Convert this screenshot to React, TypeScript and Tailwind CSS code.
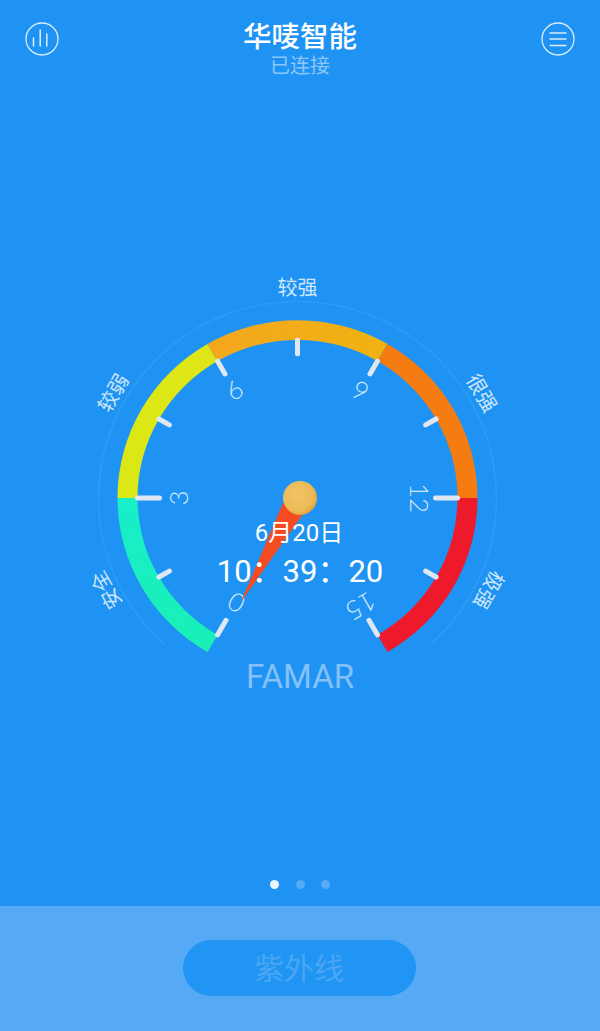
const CX = 297.5;
const CY = 498;
const SQUASH = 0.988; // the dial is a touch flatter than a true circle

/** Polar point on the dial; angle is degrees clockwise from straight up. */
function pt(r: number, deg: number) {
  const a = (deg * Math.PI) / 180;
  return { x: CX + r * Math.sin(a), y: CY - r * Math.cos(a) * SQUASH };
}

function band(from: number, to: number, r0 = 160, r1 = 180) {
  const a = pt(r1, from);
  const b = pt(r1, to);
  const c = pt(r0, to);
  const d = pt(r0, from);
  return `M${a.x} ${a.y}A${r1} ${r1 * SQUASH} 0 0 1 ${b.x} ${b.y}L${c.x} ${c.y}A${r0} ${r0 * SQUASH} 0 0 0 ${d.x} ${d.y}Z`;
}

const SEGMENTS = [
  { from: 210, to: 270, fill: "url(#seg-teal)" },
  { from: 270, to: 330, fill: "url(#seg-lime)" },
  { from: 330, to: 390, fill: "url(#seg-amber)" },
  { from: 30, to: 90, fill: "#f47c10" },
  { from: 90, to: 150, fill: "#ee1a2b" },
];

const TICKS = [
  { deg: 210, len: 17 },
  { deg: 240, len: 12 },
  { deg: 270, len: 22 },
  { deg: 300, len: 12 },
  { deg: 330, len: 15 },
  { deg: 360, len: 14 },
  { deg: 390, len: 15 },
  { deg: 420, len: 12 },
  { deg: 450, len: 22 },
  { deg: 480, len: 12 },
  { deg: 510, len: 17 },
];
const NUMBERS = [
  { text: "0", deg: 210, r: 123 },
  { text: "3", deg: 270, r: 120 },
  { text: "6", deg: 330, r: 127 },
  { text: "9", deg: 30, r: 126 },
  { text: "12", deg: 90, r: 122 },
  { text: "15", deg: 150, r: 127 },
];
const LABELS = [
  { text: "安全", deg: 244, rot: 240 },
  { text: "较弱", deg: 300, rot: 300 },
  { text: "较强", deg: 0, rot: 0 },
  { text: "很强", deg: 60, rot: 60 },
  { text: "极强", deg: 116, rot: 120 },
];

function Gauge() {
  const ringStart = pt(199, 222);
  const ringEnd = pt(199, 138);
  return (
    <svg viewBox="0 270 600 387" className="block w-[600px] h-[387px]">
      <defs>
        <linearGradient id="seg-teal" x1="0" y1="0" x2="0" y2="1">
          <stop offset="0" stopColor="#18eec8" />
          <stop offset="1" stopColor="#19f0b6" />
        </linearGradient>
        <linearGradient id="seg-lime" x1="0" y1="1" x2="1" y2="0">
          <stop offset="0" stopColor="#dbe815" />
          <stop offset="1" stopColor="#dfe617" />
        </linearGradient>
        <linearGradient id="seg-amber" x1="0" y1="0" x2="1" y2="0">
          <stop offset="0" stopColor="#f4a71f" />
          <stop offset="1" stopColor="#f0b210" />
        </linearGradient>
        <radialGradient id="hub" cx="0.42" cy="0.42" r="0.6">
          <stop offset="0" stopColor="#efc467" />
          <stop offset="0.75" stopColor="#edbb58" />
          <stop offset="1" stopColor="#e8a23c" />
        </radialGradient>
      </defs>

      <path
        d={`M${ringStart.x} ${ringStart.y}A199 ${199 * SQUASH} 0 1 1 ${ringEnd.x} ${ringEnd.y}`}
        fill="none"
        stroke="#2f9cf4"
        strokeWidth="1.5"
      />

      {SEGMENTS.map((s) => (
        <path key={s.from} d={band(s.from, s.to)} fill={s.fill} />
      ))}

      {TICKS.map((t) => {
        const a = pt(160, t.deg);
        const b = pt(160 - t.len, t.deg);
        return (
          <line
            key={t.deg}
            x1={a.x}
            y1={a.y}
            x2={b.x}
            y2={b.y}
            stroke="#dfe8f2"
            strokeWidth="5"
            strokeLinecap="round"
          />
        );
      })}

      {NUMBERS.map((n) => {
        const p = pt(n.r, n.deg);
        return (
          <text
            key={n.text}
            transform={`translate(${p.x} ${p.y}) rotate(${n.deg})`}
            textAnchor="middle"
            dominantBaseline="central"
            fill="#d5e9fc"
            className="text-[26px] font-light font-['Lato',sans-serif]"
          >
            {n.text}
          </text>
        );
      })}

      {LABELS.map((l) => {
        const p = pt(214, l.deg);
        return (
          <text
            key={l.text}
            transform={`translate(${p.x} ${p.y}) rotate(${l.rot})`}
            textAnchor="middle"
            dominantBaseline="central"
            fill="#cfe6fb"
            className="text-[20px] font-['Noto_Sans_CJK_SC',sans-serif]"
          >
            {l.text}
          </text>
        );
      })}

      <polygon points="241,602 283,503 303,514" fill="#f44b20" />
      <circle cx="300" cy="498" r="17" fill="url(#hub)" />
    </svg>
  );
}

function ChartIcon() {
  return (
    <svg width="34" height="34" viewBox="0 0 34 34" fill="none" stroke="#dcedfc" strokeWidth="1.3">
      <circle cx="17" cy="17" r="16" />
      <path d="M8.5 16V24M15.2 8V24M21.8 12V24" strokeLinecap="round" strokeWidth="1.5" />
    </svg>
  );
}

function MenuIcon() {
  return (
    <svg width="34" height="34" viewBox="0 0 34 34" fill="none" stroke="#dcedfc" strokeWidth="1.3">
      <circle cx="17" cy="17" r="16" />
      <path d="M8.5 11H25.5M8.5 17H25.5M8.5 23.5H25.5" strokeWidth="1.6" />
    </svg>
  );
}

export default function App() {
  return (
    <div className="w-[600px] h-[1031px] flex flex-col overflow-hidden bg-[#1e93f3] font-['Roboto','Noto_Sans_CJK_SC',sans-serif]">
      <header className="h-[270px] shrink-0 flex items-start justify-between px-[25px] pt-[22px]">
        <ChartIcon />
        <div className="flex flex-col items-center">
          <h1 className="text-[28.5px] leading-[31px] font-medium text-white">华唛智能</h1>
          <p className="text-[20px] leading-[26px] text-[#8cc6f8]">已连接</p>
        </div>
        <MenuIcon />
      </header>

      <div className="relative shrink-0">
        <Gauge />
        <div className="absolute left-0 right-0 top-[246px] flex flex-col items-center text-white">
          <div className="text-[24px] leading-[34px] ml-[-2px]">6月20日</div>
          <div className="text-[31px] leading-[44px]">10：39：20</div>
        </div>
      </div>

      <div className="text-center text-[33px] leading-[40px] text-[#85c1f8]">FAMAR</div>

      <div className="flex-1 flex items-end justify-center gap-[16.5px] pb-[17px]">
        <span className="w-[9px] h-[9px] rounded-full bg-[#eaf5fe]" />
        <span className="w-[9px] h-[9px] rounded-full bg-[#58aaf3]" />
        <span className="w-[9px] h-[9px] rounded-full bg-[#58aaf3]" />
      </div>

      <div className="h-[125px] shrink-0 flex justify-center pt-[34px] pr-[2px] bg-[#55a9f5]">
        <button className="w-[233px] h-[56px] rounded-full bg-[#2095f3] text-[30px] text-[#4aa5f5]">
          紫外线
        </button>
      </div>
    </div>
  );
}
